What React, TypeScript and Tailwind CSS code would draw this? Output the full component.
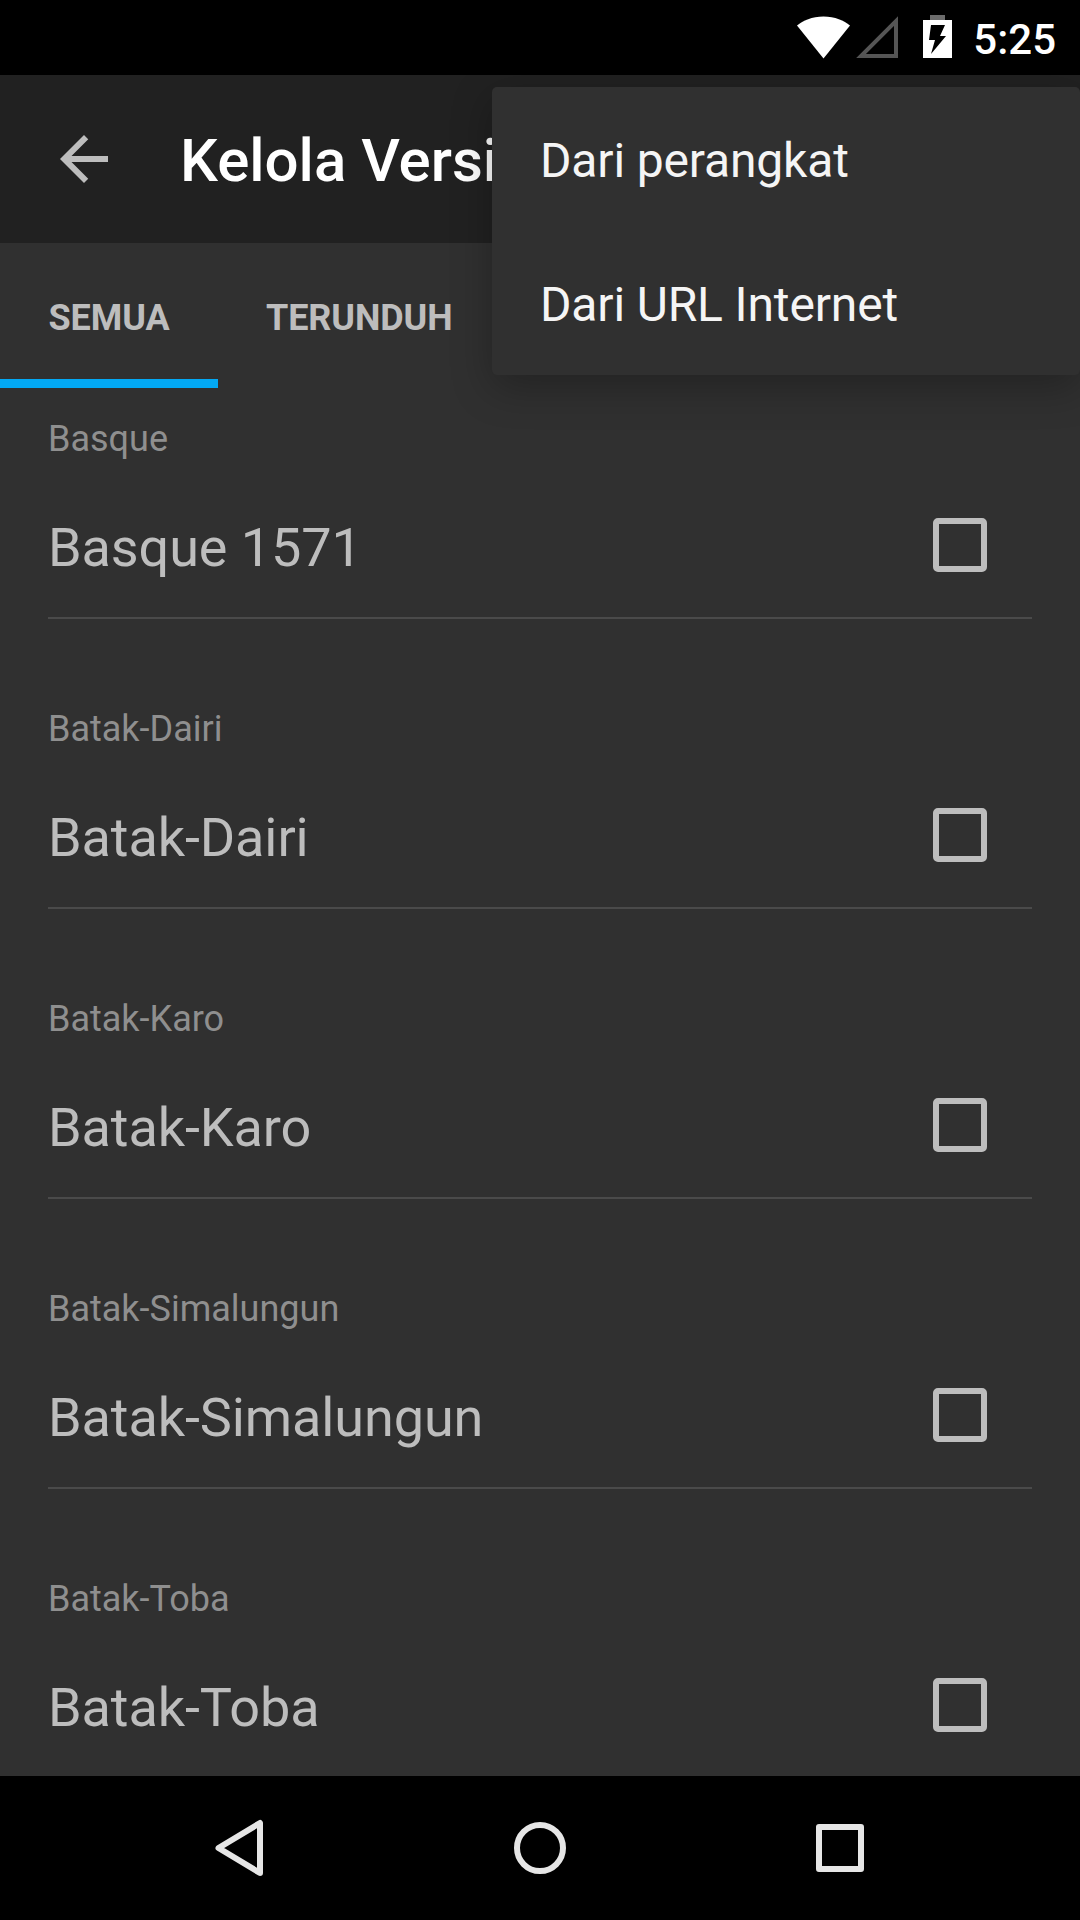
const sections = [
  { label: "Basque", name: "Basque 1571" },
  { label: "Batak-Dairi", name: "Batak-Dairi" },
  { label: "Batak-Karo", name: "Batak-Karo" },
  { label: "Batak-Simalungun", name: "Batak-Simalungun" },
  { label: "Batak-Toba", name: "Batak-Toba" },
];

function StatusBar() {
  return (
    <div className="h-[75px] shrink-0 bg-black flex items-center justify-end pr-[24px]">
      <svg className="w-[55px] h-[43px] mt-[-1px]" viewBox="0 0 55 43">
        <path d="M27.5 42.5 L54 9.5 C48 4.5 39 0.5 27.5 0.5 C16 0.5 7 4.5 1 9.5 Z" fill="#fff" />
      </svg>
      <svg className="w-[44px] h-[42px] ml-[4px] mt-[-1px]" viewBox="0 0 44 42">
        <path d="M41 5 V40 H6 Z" fill="none" stroke="#555" strokeWidth="4" />
      </svg>
      <svg className="w-[30px] h-[43px] ml-[24px] mt-[-2px]" viewBox="0 0 30 43">
        <path d="M7 5 V0 H22 V5 H29 V43 H0 V5 Z" fill="#fff" />
        <path d="M7 0 H22 V5 H7 Z" fill="#6b6b6b" />
        <path d="M8 10 H22 L17 21 H23 L8 39 L12 25 H6 Z" fill="#000" />
      </svg>
      <span className="ml-[20px] pt-[4px] text-[42px] leading-none font-medium text-white font-['Roboto',sans-serif]">5:25</span>
    </div>
  );
}

function Toolbar() {
  return (
    <div className="h-[168px] shrink-0 bg-[#212121] flex items-center pl-[48px]">
      <svg className="w-[72px] h-[72px]" viewBox="0 0 24 24">
        <path d="M20 11H7.83l5.59-5.59L12 4l-8 8 8 8 1.41-1.41L7.83 13H20v-2z" fill="#bdbdbd" />
      </svg>
      <h1 className="ml-[60px] pt-[4px] text-[60px] leading-none font-medium text-white whitespace-nowrap">Kelola Versi</h1>
    </div>
  );
}

function Tabs() {
  return (
    <div className="h-[145px] shrink-0 flex items-start text-[36px] font-bold text-[#bdbdbd] tracking-[-0.1px]">
      <div className="w-[218px] h-[145px] border-b-[9px] border-[#03a9f4] flex justify-center pt-[53px] leading-[44px]">SEMUA</div>
      <div className="px-[48px] pt-[53px] leading-[44px]">TERUNDUH</div>
    </div>
  );
}

function Section({ label, name }: { label: string; name: string }) {
  return (
    <div className="shrink-0 px-[48px] pt-[28px] pb-[59px]">
      <p className="h-[46px] leading-[46px] text-[36px] text-[#8f8f8f]">{label}</p>
      <div className="h-[157px] border-b-2 border-[#4a4a4a] flex items-center justify-between pt-[16px]">
        <span className="text-[54px] leading-none text-[#bdbdbd] tracking-[-0.1px]">{name}</span>
        <span className="w-[54px] h-[54px] mr-[45px] mt-[-5px] rounded-[5px] border-[6px] border-[#bdbdbd]" />
      </div>
    </div>
  );
}

function NavBar() {
  return (
    <div className="h-[144px] shrink-0 bg-black flex items-center px-[90px]">
      <div className="w-[300px] flex justify-center">
        <svg className="w-[50px] h-[58px]" viewBox="0 0 50 58">
          <path d="M45 4 V54 L3.5 29 Z" fill="none" stroke="#e6e6e6" strokeWidth="6" strokeLinejoin="round" />
        </svg>
      </div>
      <div className="w-[300px] flex justify-center">
        <span className="w-[52px] h-[52px] rounded-full border-[6px] border-[#e6e6e6]" />
      </div>
      <div className="w-[300px] flex justify-center">
        <span className="w-[48px] h-[48px] rounded-[3px] border-[6px] border-[#e6e6e6]" />
      </div>
    </div>
  );
}

export default function App() {
  return (
    <div className="relative w-[1080px] h-[1920px] flex flex-col overflow-hidden bg-[#303030] font-['Roboto',sans-serif]">
      <StatusBar />
      <Toolbar />
      <Tabs />
      <div className="flex-1 min-h-0 overflow-hidden flex flex-col">
        {sections.map(s => (
          <Section key={s.label} label={s.label} name={s.name} />
        ))}
      </div>
      <NavBar />

      {/* overflow menu */}
      <div className="absolute left-[492px] top-[87px] w-[588px] h-[288px] rounded-[5px] bg-[#303030] shadow-[0_12px_40px_rgba(0,0,0,0.28)] text-[48px] text-[#f5f5f5] tracking-[-0.15px]">
        <div className="h-[144px] flex items-center pl-[48px] pt-[4px]">Dari perangkat</div>
        <div className="h-[144px] flex items-center pl-[48px] pt-[4px]">Dari URL Internet</div>
      </div>
    </div>
  );
}
